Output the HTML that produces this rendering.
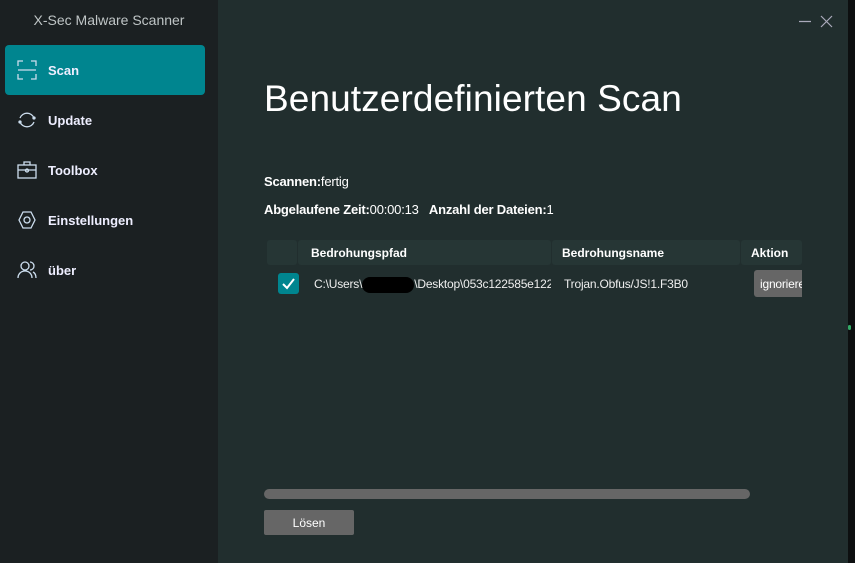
<!DOCTYPE html>
<html><head><meta charset="utf-8"><style>
*{margin:0;padding:0;box-sizing:border-box}
body{width:855px;height:563px;overflow:hidden;background:#212e2e;font-family:"Liberation Sans",sans-serif;position:relative;color:#fff}
.side{position:absolute;left:0;top:0;width:218px;height:563px;background:#1b2022}
.app{position:absolute;left:0;top:12px;width:218px;text-align:center;color:#bfc5c6;font-size:14px}
.item{position:absolute;left:5px;width:200px;height:50px;border-radius:4px;font-size:13px;font-weight:bold;color:#eef;display:flex;align-items:center}
.item svg{position:absolute;left:12px;top:15px}
.item span{position:absolute;left:43px;top:18px}
.act{background:#00858f}
.strip{position:absolute;left:848px;top:0;width:7px;height:563px;background:#0d0f10}
h1{position:absolute;left:264px;top:78px;font-size:37px;font-weight:normal;color:#fff;letter-spacing:0.1px}
.t{position:absolute;font-size:13px;color:#fff;letter-spacing:-0.2px}
.hd{position:absolute;top:240px;height:25px;background:#263635;border-radius:3px;font-size:12px;font-weight:bold;padding:6px 0 0 13px}
.cell{position:absolute;top:277px;font-size:12px;color:#eee;white-space:nowrap;overflow:hidden;letter-spacing:-0.2px}
</style></head><body>
<div class="side">
<div class="app">X-Sec Malware Scanner</div>
<div class="item act" style="top:45px"><svg width="20" height="20" fill="none" stroke="#cde" stroke-width="1.3"><path d="M1 6V1h5M14 1h5v5M19 14v5h-5M6 19H1v-5M1 10h18"/></svg><span>Scan</span></div>
<div class="item" style="top:95px"><svg width="20" height="20" fill="none" stroke="#cde" stroke-width="1.3"><path d="M3 8a7.5 7.5 0 0 1 14 0M17 12a7.5 7.5 0 0 1-14 0"/><circle cx="3" cy="12" r="1" fill="#cde"/><circle cx="17" cy="8" r="1" fill="#cde"/></svg><span>Update</span></div>
<div class="item" style="top:145px"><svg width="20" height="20" fill="none" stroke="#cde" stroke-width="1.3"><rect x="1" y="5" width="18" height="13"/><path d="M7 5V2h6v3M1 10h18"/><circle cx="10" cy="10.5" r="1.5"/></svg><span>Toolbox</span></div>
<div class="item" style="top:195px"><svg width="20" height="20" fill="none" stroke="#cde" stroke-width="1.3"><path d="M6 2h8l4 8-4 8H6l-4-8z"/><circle cx="10" cy="10" r="3"/></svg><span>Einstellungen</span></div>
<div class="item" style="top:245px"><svg width="20" height="20" fill="none" stroke="#cde" stroke-width="1.3"><circle cx="8" cy="6" r="4"/><path d="M1 18c0-4 3-7 7-7s7 3 7 7M13 2a4 4 0 0 1 0 8M16 12c2 1 3 3 3 6"/></svg><span>über</span></div>
</div>
<svg style="position:absolute;left:797px;top:14px" width="40" height="16" stroke="#aab" stroke-width="1.2"><path d="M2 7.5h12M24 2l11 11M35 2 24 13"/></svg>
<div class="strip"></div>
<div style="position:absolute;left:848px;top:325px;width:3px;height:5px;background:#3a6;border-radius:2px"></div>
<h1>Benutzerdefinierten Scan</h1>
<div class="t" style="left:264px;top:174px"><b>Scannen:</b>fertig</div>
<div class="t" style="left:264px;top:202px"><b>Abgelaufene Zeit:</b>00:00:13 &nbsp; <b>Anzahl der Dateien:</b>1</div>
<div class="hd" style="left:267px;width:30px"></div>
<div class="hd" style="left:298px;width:253px">Bedrohungspfad</div>
<div class="hd" style="left:552px;width:188px;padding-left:10px">Bedrohungsname</div>
<div class="hd" style="left:741px;width:61px;padding-left:10px">Aktion</div>
<div style="position:absolute;left:278px;top:273px;width:21px;height:21px;background:#00858f;border-radius:3px"><svg width="21" height="21" fill="none" stroke="#fff" stroke-width="2"><path d="M5 11l4 4 7-9"/></svg></div>
<div class="cell" style="left:314px;width:237px">C:\Users\<span style="display:inline-block;width:52px;height:16px;background:#000;border-radius:8px;vertical-align:middle"></span>\Desktop\053c122585e122</div>
<div class="cell" style="left:564px">Trojan.Obfus/JS!1.F3B0</div>
<div style="position:absolute;left:754px;top:270px;width:48px;height:27px;background:#666;border-radius:3px 0 0 3px;font-size:12px;padding:7px 0 0 6px;overflow:hidden;white-space:nowrap;letter-spacing:-0.2px">ignorieren</div>
<div style="position:absolute;left:264px;top:489px;width:486px;height:10px;background:#666;border-radius:5px"></div>
<div style="position:absolute;left:264px;top:510px;width:90px;height:25px;background:#666;border-radius:2px;font-size:12px;text-align:center;padding-top:6px">Lösen</div>
</body></html>
